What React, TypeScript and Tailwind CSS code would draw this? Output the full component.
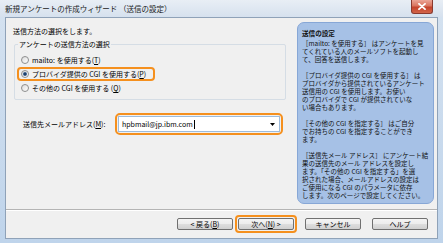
import React from "react";

const F = "[font-family:'Noto_Sans_CJK_JP',sans-serif]";

function Radio({ checked }: { checked?: boolean }) {
  return (
    <span className="w-[8px] h-[8px] rounded-full border border-[#8e8f8f] bg-[linear-gradient(135deg,#dcdcdc,#ffffff)] flex items-center justify-center shrink-0">
      {checked && <span className="w-[4px] h-[4px] rounded-full bg-[radial-gradient(circle,#1d3f6b_30%,#5b86bd_100%)]" />}
    </span>
  );
}

function RadioRow({ checked, highlight, children }: { checked?: boolean; highlight?: boolean; children: React.ReactNode }) {
  return (
    <div className="h-[14px] flex items-center">
      <div
        className={
          "ml-[2px] h-[14px] w-[138px] rounded-[4px] border-2 flex items-center pl-[2px] gap-[3px] " +
          (highlight ? "border-[#f5901e]" : "border-transparent")
        }
      >
        <Radio checked={checked} />
        <span className="text-[7px] leading-[10px] text-black whitespace-nowrap">{children}</span>
      </div>
    </div>
  );
}

function Btn({ children }: { children: React.ReactNode }) {
  return (
    <div className="h-[12px] w-[56px] rounded-[2px] border border-[#707070] bg-[linear-gradient(#f4f4f4_0%,#ececec_50%,#dedede_51%,#d0d0d0_100%)] flex items-center justify-center text-[7px] leading-none text-black whitespace-nowrap">
      {children}
    </div>
  );
}

const lines: (string | null)[] = [
  "［mailto: を使用する］ はアンケートを見",
  "てくれている人のメールソフトを起動し",
  "て、回答を送信します。",
  null,
  "［プロバイダ提供の CGI を使用する］ は",
  "プロバイダから提供されているアンケート",
  "送信用の CGI を使用します。お使い",
  "のプロバイダで CGI が提供されていな",
  "い場合もあります。",
  null,
  "［その他の CGI を指定する］ はご自分",
  "でお持ちの CGI を指定することができ",
  "ます。",
  null,
  "［送信先メール アドレス］ にアンケート結",
  "果の送信先のメール アドレスを設定し",
  "ます。「その他の CGI を指定する」を選",
  "択された場合、メールアドレスの設定は",
  "ご使用になる CGI のパラメータに依存",
  "します。次のページで設定してください。",
];

export default function App() {
  return (
    <div className={"w-[443px] h-[243px] overflow-hidden flex flex-col bg-[linear-gradient(#d5e2f0,#bfd4eb)] " + F}>
      {/* Title bar */}
      <div className="relative h-[17px] shrink-0 flex items-center pl-[5px] bg-[linear-gradient(#e8eef5,#d6e1ee)]">
        <span className="text-[7.5px] leading-[10px] text-[#1a1a1a] whitespace-nowrap">新規アンケートの作成ウィザード （送信の設定）</span>
        <div className="absolute right-[10px] top-0 w-[22px] h-[14px] rounded-b-[3px] border border-t-0 border-[#8a3a2f] bg-[linear-gradient(#eba596_0%,#d9745f_45%,#c4432c_55%,#d2654a_100%)] flex items-center justify-center">
          <svg width="8" height="7" viewBox="0 0 8 7">
            <path d="M1 0.8 L7 6.2 M7 0.8 L1 6.2" stroke="#ffffff" strokeWidth="1.8" strokeLinecap="round" />
          </svg>
        </div>
      </div>

      {/* Content */}
      <div className="flex-1 mx-[5px] mb-[4px] border border-[#8fa2b8] bg-[#f0f0f0] flex flex-col">
        <div className="h-[191px] shrink-0 flex">
          {/* Left column */}
          <div className="w-[291px] shrink-0 flex flex-col">
            <div className="pt-[8px] pl-[7px] text-[7px] leading-[10px] text-black">送信方法の選択をします。</div>
            <div className="relative mt-[8px] ml-[8px] w-[272px] h-[56px] border border-[#d5dde5] rounded-[2px] pt-[8px]">
              <span className="absolute -top-[6px] left-[3px] px-[1px] bg-[#f0f0f0] text-[7px] leading-[10px] text-black whitespace-nowrap">
                アンケートの送信方法の選択
              </span>
              <RadioRow>
                mailto: を使用する(<span className="underline">T</span>)
              </RadioRow>
              <RadioRow checked highlight>
                プロバイダ提供の CGI を使用する(<span className="underline">P</span>)
              </RadioRow>
              <RadioRow>
                その他の CGI を使用する (<span className="underline">Q</span>)
              </RadioRow>
            </div>
            <div className="mt-[13px] pl-[17px] flex items-center">
              <span className="w-[92px] shrink-0 text-[7px] leading-[10px] text-black whitespace-nowrap">
                送信先メールアドレス(<span className="underline">M</span>):
              </span>
              <div className="w-[168px] h-[22px] rounded-[5px] border-2 border-[#f5901e] px-[1px] py-[1px] flex">
                <div className="flex-1 border border-[#9ebcdc] bg-white flex items-center pl-[3px] pr-[3px]">
                  <span className="text-[7px] leading-[10px] text-black">hpbmail@jp.ibm.com</span>
                  <span className="w-[1px] h-[9px] bg-black ml-[1px]" />
                  <span className="flex-1" />
                  <svg width="5" height="3" viewBox="0 0 5 3" className="mr-[1px]">
                    <path d="M0 0 H5 L2.5 3 Z" fill="#000" />
                  </svg>
                </div>
              </div>
            </div>
          </div>

          {/* Right panel */}
          <div className="mt-[4px] w-[137px] h-[182px] shrink-0 rounded-[7px] border border-[#87a7d6] bg-[#a6c1e6] pl-[4px] pt-[6px] text-[#111]">
            <div className="text-[6.6px] leading-[8px] font-bold whitespace-nowrap">送信の設定</div>
            <div className="mt-[2px]">
              {lines.map((l, i) => (
                <div key={i} className="h-[8px] text-[6.5px] leading-[8px] whitespace-nowrap">
                  {l ?? ""}
                </div>
              ))}
            </div>
          </div>
        </div>

        {/* Separator */}
        <div className="h-[2px] shrink-0 border-t border-[#b4b4b4] border-b border-b-white" />

        {/* Buttons */}
        <div className="pt-[4px] flex items-center justify-end pr-[9px]">
          <Btn>
            &lt; 戻る(<span className="underline">B</span>)
          </Btn>
          <div className="ml-[2px] h-[18px] w-[62px] rounded-[4px] border-2 border-[#f5901e] flex items-center justify-center">
            <Btn>
              次へ(<span className="underline">N</span>) &gt;
            </Btn>
          </div>
          <div className="ml-[8px]">
            <Btn>キャンセル</Btn>
          </div>
          <div className="ml-[11px]">
            <Btn>ヘルプ</Btn>
          </div>
        </div>
      </div>
    </div>
  );
}
